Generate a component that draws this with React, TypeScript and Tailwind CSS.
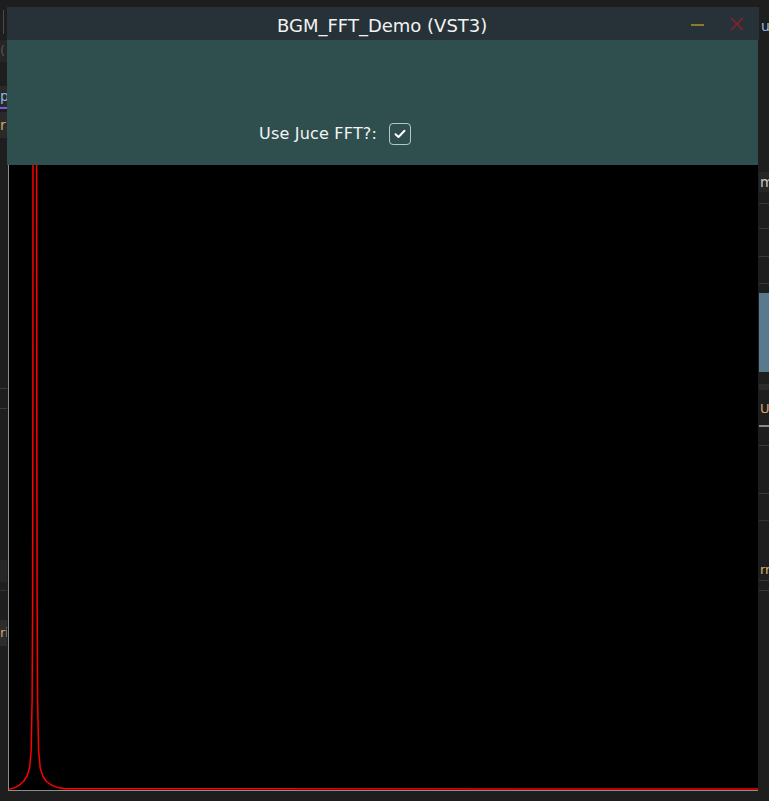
import React from 'react';

// spike outline in page coordinates, shifted into the plot's svg space below
const spikeLeft: [number, number][] = [
  [8, 789], [11, 788.7], [15, 787.6], [19, 785.4], [23.5, 781.5], [27, 776], [29.6, 768],
  [31.2, 750], [32.1, 700], [32.6, 600], [32.9, 400], [33, 150],
];
const spikeRight: [number, number][] = [
  [36.6, 150], [36.8, 400], [37.1, 600], [37.6, 700], [38.6, 750], [40.2, 768],
  [42.8, 776], [46.5, 781.5], [52, 785.4], [58, 787.6], [65, 788.7], [758, 789],
];

const toPath = (pts: [number, number][]) =>
  pts.map(([x, y], i) => `${i === 0 ? 'M' : 'L'}${(x - 9).toFixed(1)} ${(y - 165).toFixed(1)}`).join(' ');

const spikePath = toPath([...spikeLeft, ...spikeRight]);

// strip of the host app visible left of the plugin window
function LeftStrip() {
  return (
    <div className="w-[7px] flex flex-col shrink-0">
      <div className="mt-[10px] ml-[3px] w-px h-[24px] bg-[#4a4a4a]" />
      <div className="mt-[6px] h-[22px] bg-[#262626] text-[13px] leading-[22px] text-[#555]">(</div>
      <div className="mt-[24px] h-[21px] bg-[#2a2a2a] text-[14px] leading-[20px] text-[#8fb3d9]">p</div>
      <div className="h-[2px] bg-[#7b5cd6]" />
      <div className="mt-[3px] h-[26px] bg-[#2a2a2a] text-[14px] leading-[26px] text-[#d9a36a]">r</div>
      <div className="mt-[250px] h-px bg-[#3a3a3a]" />
      <div className="mt-[19px] h-px bg-[#3a3a3a]" />
      <div className="mt-[151px] h-[22px] bg-[#262626]" />
      <div className="mt-[8px] h-px bg-[#333]" />
      <div className="mt-[29px] h-[26px] bg-[#2c2c2c] text-[13px] leading-[26px] text-[#d9a36a] whitespace-nowrap overflow-hidden">ri</div>
    </div>
  );
}

// strip of the host app visible right of the plugin window
function RightStrip() {
  return (
    <div className="w-[10px] flex flex-col shrink-0">
      <div className="mt-[18px] h-[16px] pl-[2px] text-[14px] leading-[16px] text-[#9fb7d6] whitespace-nowrap overflow-hidden">ub</div>
      <div className="mt-[138px] h-[20px] pl-px bg-[#262626] text-[14px] leading-[20px] text-[#c8c8c8] overflow-hidden">m</div>
      <div className="mt-[11px] h-px bg-[#3a3a3a]" />
      <div className="mt-[24px] h-px bg-[#3a3a3a]" />
      <div className="mt-[27px] h-px bg-[#3a3a3a]" />
      <div className="mt-[26px] h-px bg-[#3a3a3a]" />
      <div className="mt-[9px] h-[79px] bg-[#587a8c]" />
      <div className="mt-[12px] h-[6px] bg-[#2b2b2b]" />
      <div className="mt-[12px] h-[14px] pl-px text-[13px] leading-[14px] text-[#d9a36a]">U</div>
      <div className="mt-[9px] h-[2px] bg-[#8a8a8a]" />
      <div className="mt-[18px] h-px bg-[#3a3a3a]" />
      <div className="mt-[47px] h-px bg-[#3a3a3a]" />
      <div className="mt-[26px] h-px bg-[#333]" />
      <div className="mt-[42px] h-[14px] pl-px text-[13px] leading-[14px] text-[#d9b36a] whitespace-nowrap overflow-hidden">rm</div>
      <div className="mt-[3px] h-px bg-[#3a3a3a]" />
      <div className="mt-[9px] h-px bg-[#3a3a3a]" />
    </div>
  );
}

export default function App() {
  return (
    <div
      className="w-[769px] h-[801px] bg-[#1e1e1e] overflow-hidden flex"
      style={{ fontFamily: '"DejaVu Sans", Verdana, sans-serif' }}
    >
      <LeftStrip />

      {/* plugin window */}
      <div className="w-[752px] shrink-0 pt-[7px]">
        <div className="h-[784px] flex flex-col">
          <div className="h-[33px] bg-[#263238] flex items-center pl-[270px] pr-[15px]">
            <span className="text-[18px] text-[#f2f2f2] mt-[3px]">BGM_FFT_Demo (VST3)</span>
            <div className="ml-auto w-[13px] h-[2px] bg-[#8a7e25] mt-[2px]" />
            <svg className="ml-[26px]" width="14" height="14" viewBox="0 0 14 14">
              <path d="M1 1 L13 13 M13 1 L1 13" stroke="#8c1f2c" strokeWidth="1.6" />
            </svg>
          </div>

          <div className="h-[125px] mr-px bg-[#2f4f4f] flex items-end pl-[252px] pb-[19px]">
            <div className="flex items-center gap-[12px]">
              <span className="text-[16px] text-[#f4f4f4] tracking-[0.2px]">Use Juce FFT?:</span>
              <div className="w-[22px] h-[22px] rounded-[4px] border-[1.5px] border-[#b9c4c4] flex items-center justify-center">
                <svg width="12" height="10" viewBox="0 0 12 10">
                  <path d="M1.5 5.2 L4.5 8 L10.5 1.8" fill="none" stroke="#ffffff" strokeWidth="2" strokeLinecap="round" strokeLinejoin="round" />
                </svg>
              </div>
            </div>
          </div>

          <div className="flex-1 ml-px mr-px bg-black border-l border-b border-[#8e8e8e] overflow-hidden">
            <svg width="749" height="625" viewBox="0 0 749 625" className="block">
              <path d={spikePath} fill="none" stroke="#ff0000" strokeWidth="1.5" strokeLinejoin="round" />
            </svg>
          </div>
        </div>
      </div>

      <RightStrip />
    </div>
  );
}
